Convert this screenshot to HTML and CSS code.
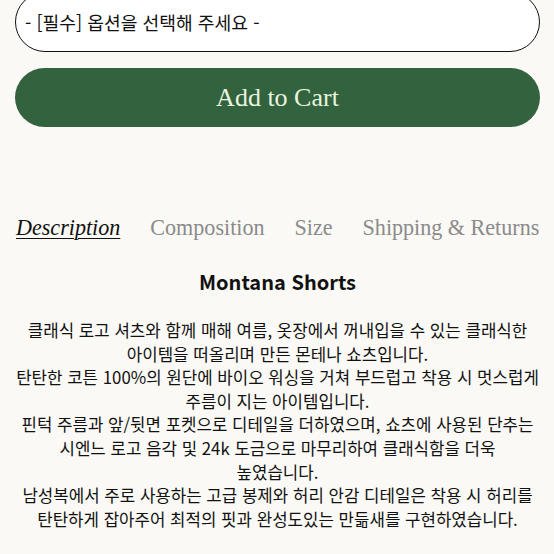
FILE: index.html
```html
<!DOCTYPE html>
<html lang="ko">
<head>
  <meta charset="UTF-8">
  <meta name="viewport" content="width=device-width, initial-scale=1.0">
  <title>Montana Shorts</title>
  <link rel="stylesheet" href="styles.css">
</head>
<body>
  <main class="product">
    <div class="option-select">- [필수] 옵션을 선택해 주세요 -</div>
    <button class="cart-btn">Add to Cart</button>

    <nav class="tabs">
      <a class="tab active">Description</a>
      <a class="tab">Composition</a>
      <a class="tab">Size</a>
      <a class="tab">Shipping &amp; Returns</a>
    </nav>

    <section class="description">
      <h2>Montana Shorts</h2>
      <p>
        클래식 로고 셔츠와 함께 매해 여름, 옷장에서 꺼내입을 수 있는 클래식한<br>
        아이템을 떠올리며 만든 몬테나 쇼츠입니다.<br>
        탄탄한 코튼 100%의 원단에 바이오 워싱을 거쳐 부드럽고 착용 시 멋스럽게<br>
        주름이 지는 아이템입니다.<br>
        핀턱 주름과 앞/뒷면 포켓으로 디테일을 더하였으며, 쇼츠에 사용된 단추는<br>
        시엔느 로고 음각 및 24k 도금으로 마무리하여 클래식함을 더욱<br>
        높였습니다.<br>
        남성복에서 주로 사용하는 고급 봉제와 허리 안감 디테일은 착용 시 허리를<br>
        탄탄하게 잡아주어 최적의 핏과 완성도있는 만듦새를 구현하였습니다.
      </p>
    </section>
  </main>
</body>
</html>
```

FILE: styles.css
```css
body {
  margin: 0;
  background-color: #faf9f5;
  color: #111;
  font-family: "Noto Sans CJK KR", "Noto Sans", sans-serif;
}
.product {
  padding: 0 14px 0 15px;
}
.option-select {
  box-sizing: border-box;
  margin-top: -8px;
  height: 60px;
  padding: 0 0 0 9px;
  display: flex;
  align-items: center;
  border: 1.5px solid #111;
  border-radius: 30px;
  background: #fff;
  font-size: 18.2px;
  line-height: 1;
  color: #111;
}
.cart-btn {
  display: block;
  width: 100%;
  height: 59px;
  margin-top: 16px;
  border: none;
  border-radius: 30px;
  background: #33623f;
  color: #e9f4df;
  font-family: "Liberation Serif", serif;
  font-size: 26px;
  cursor: pointer;
}
.tabs {
  display: flex;
  gap: 30px;
  margin-top: 86px;
  padding-left: 1px;
  font-family: "Liberation Serif", serif;
  font-size: 22.1px;
  line-height: 30px;
  white-space: nowrap;
}
.tab {
  color: #8a8a8a;
}
.tab.active {
  color: #111;
  font-style: italic;
  text-decoration: underline;
  text-underline-offset: 3px;
  text-decoration-thickness: 1px;
}
.description {
  text-align: center;
}
.description h2 {
  margin: 24px 0 0;
  font-size: 20px;
  font-weight: 700;
  line-height: 30px;
}
.description p {
  margin: 22px 0 0;
  font-size: 16.8px;
  line-height: 23.6px;
}
```
